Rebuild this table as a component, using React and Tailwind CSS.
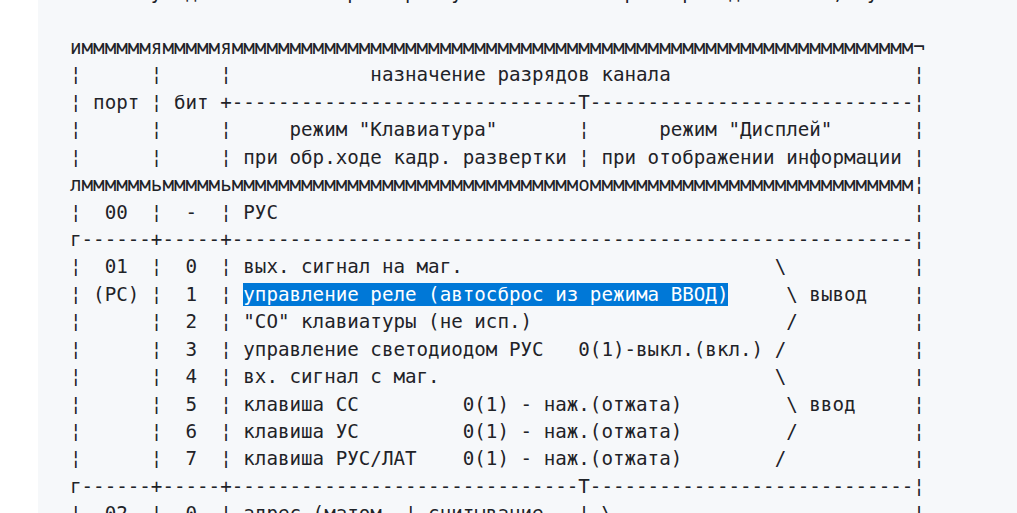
import React from "react";

function row(len, parts) {
  const a = Array(len).fill(" ");
  for (const [c, t] of parts) {
    for (let i = 0; i < t.length; i++) a[c + i] = t[i];
  }
  return a.join("").replace(/\s+$/, "");
}
const rep = (ch, n) => ch.repeat(n);
const L = 74;
const side = (bit) => [[0, "¦"], [7, "¦"], [10, bit], [13, "¦"], [73, "¦"]];

const lines = [
  row(L, [[0, "Схема"], [6, "тут"], [10, "для"], [14, "обменов"], [22, "через"], [28, "три"], [32, "пути"], [37, "канала"], [44, "набор"], [51, "пара"], [56, "один"], [61, "битов,"], [68, "тут"]]),
  "",
  "и" + rep("м", 6) + "я" + rep("м", 5) + "я" + rep("м", 59) + "¬",
  row(L, [[0, "¦"], [7, "¦"], [13, "¦"], [26, "назначение разрядов канала"], [73, "¦"]]),
  "¦ порт ¦ бит +" + rep("-", 30) + "T" + rep("-", 28) + "¦",
  row(L, [[0, "¦"], [7, "¦"], [13, "¦"], [19, 'режим "Клавиатура"'], [44, "¦"], [51, 'режим "Дисплей"'], [73, "¦"]]),
  row(L, [[0, "¦"], [7, "¦"], [13, "¦"], [15, "при обр.ходе кадр. развертки"], [44, "¦"], [46, "при отображении информации"], [73, "¦"]]),
  "л" + rep("м", 6) + "ь" + rep("м", 5) + "ь" + rep("м", 30) + "о" + rep("м", 28) + "¦",
  row(L, [...side("-"), [3, "00"], [15, "РУС"]]),
  "г" + rep("-", 6) + "+" + rep("-", 5) + "+" + rep("-", 59) + "¦",
  row(L, [...side("0"), [3, "01"], [15, "вых. сигнал на маг."], [61, "\\"]]),
  null,
  row(L, [...side("2"), [15, '"СО" клавиатуры (не исп.)'], [62, "/"]]),
  row(L, [...side("3"), [15, "управление светодиодом РУС   0(1)-выкл.(вкл.) /"]]),
  row(L, [...side("4"), [15, "вх. сигнал с маг."], [61, "\\"]]),
  row(L, [...side("5"), [15, "клавиша СС"], [34, "0(1) - наж.(отжата)"], [62, "\\ ввод"]]),
  row(L, [...side("6"), [15, "клавиша УС"], [34, "0(1) - наж.(отжата)"], [62, "/"]]),
  row(L, [...side("7"), [15, "клавиша РУС/ЛАТ"], [34, "0(1) - наж.(отжата)"], [61, "/"]]),
  "г" + rep("-", 6) + "+" + rep("-", 5) + "+" + rep("-", 30) + "T" + rep("-", 28) + "¦",
  row(L, [...side("0"), [3, "02"], [15, "адрес (матом"], [29, "¦"], [31, "считывание"], [44, "¦"], [46, "\\"]]),
];

const hlBefore = "¦ (РС) ¦  1  ¦ ";
const hlText = "управление реле (автосброс из режима ВВОД)";
const hlAfter = row(17, [[5, "\\"], [7, "вывод"], [16, "¦"]]);

export default function App() {
  return (
    <div className="h-[513px] w-[1017px] overflow-hidden bg-white pl-[38px]">
      <div className="flex h-full flex-col overflow-hidden bg-[#f6f8fa]">
        <pre className="-mt-[21px] pl-[32px] font-['DejaVu_Sans_Mono',monospace] text-[19.2px] leading-[27.44px] text-[#1f2328] whitespace-pre">
          {lines.map((ln, i) =>
            ln === null ? (
              <div key={i}>
                {hlBefore}
                <span className="bg-[#0078d7] text-white">{hlText}</span>
                {hlAfter}
              </div>
            ) : (
              <div key={i}>{ln === "" ? "\u00a0" : ln}</div>
            )
          )}
        </pre>
      </div>
    </div>
  );
}
